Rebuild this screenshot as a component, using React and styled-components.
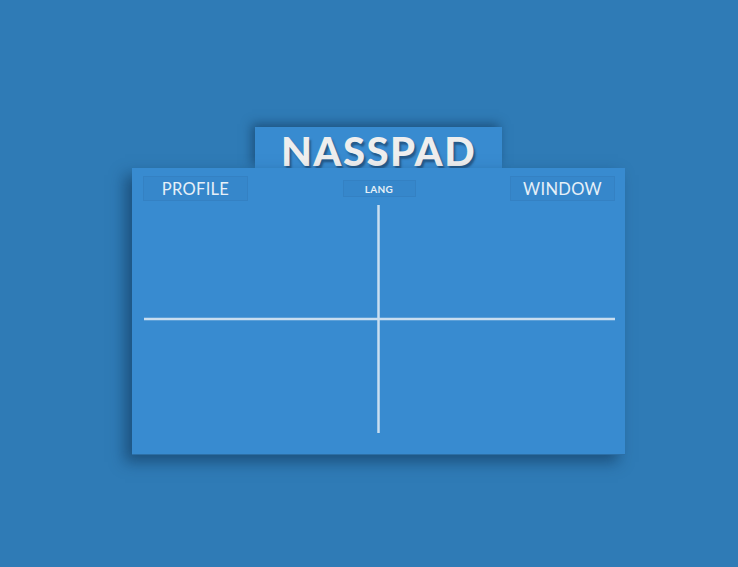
import React from 'react'
import styled, { createGlobalStyle } from 'styled-components'

const Global = createGlobalStyle`
  html, body {
    margin: 0;
    height: 100%;
    background: #2f7bb6;
  }
  body {
    font-family: 'Lato', 'Liberation Sans', sans-serif;
  }
`

function App() {
  return (
    <>
      <Global />
      <Page>
        <Pad>
          <Tab>
            <Title>NASSPAD</Title>
          </Tab>
          <Panel>
            <Toolbar>
              <MenuButton>PROFILE</MenuButton>
              <MenuButton small>LANG</MenuButton>
              <MenuButton>WINDOW</MenuButton>
            </Toolbar>
            <Plot>
              <svg width="471" height="228" viewBox="0 0 471 228">
                <line x1="234.5" y1="0" x2="234.5" y2="228" stroke="#c9def0" strokeWidth="2.5" />
                <line x1="0" y1="114" x2="471" y2="114" stroke="#c9def0" strokeWidth="2.5" />
              </svg>
            </Plot>
          </Panel>
        </Pad>
      </Page>
    </>
  )
}

const Page = styled.div`
  min-height: 567px;
  padding: 127px 0 0 132px;
  box-sizing: border-box;
`

const Pad = styled.div`
  width: 493px;
  display: flex;
  flex-direction: column;
`

const Tab = styled.div`
  align-self: flex-start;
  margin-left: 123px;
  width: 247px;
  height: 41px;
  background: #388bd0;
  display: flex;
  justify-content: center;
  align-items: center;
  box-shadow: -3px -3px 10px rgba(10, 40, 70, 0.5);
  position: relative;
  z-index: 0;
`

const Title = styled.h1`
  margin: 6px 0 0;
  font-size: 40px;
  font-weight: 900;
  letter-spacing: 1.5px;
  color: #eeeeee;
  text-shadow: 2px 3px 2px rgba(20, 50, 80, 0.55);
`

const Panel = styled.div`
  position: relative;
  z-index: 1;
  height: 287px;
  background: #388bd0;
  border-bottom: 1px solid #2c6fa6;
  box-sizing: border-box;
  padding: 8px 10px 21px 11px;
  display: flex;
  flex-direction: column;
  box-shadow: -7px 7px 14px rgba(10, 40, 70, 0.5);
`

const Toolbar = styled.div`
  display: flex;
  justify-content: space-between;
  align-items: center;
  height: 25px;
`

const MenuButton = styled.button`
  font-family: 'Lato', 'Liberation Sans', sans-serif;
  color: #e6f0f8;
  background: rgba(40, 110, 175, 0.12);
  border: 1px solid #3481c3;
  box-sizing: border-box;
  width: ${p => (p.small ? '73px' : '105px')};
  height: ${p => (p.small ? '17px' : '25px')};
  font-size: ${p => (p.small ? '10px' : '16.5px')};
  font-weight: ${p => (p.small ? 700 : 400)};
  padding: 0;
  letter-spacing: 0.3px;
`

const Plot = styled.div`
  margin-top: 4px;
  flex: 1;
  display: flex;
  align-items: center;
  justify-content: center;
`

export default App
